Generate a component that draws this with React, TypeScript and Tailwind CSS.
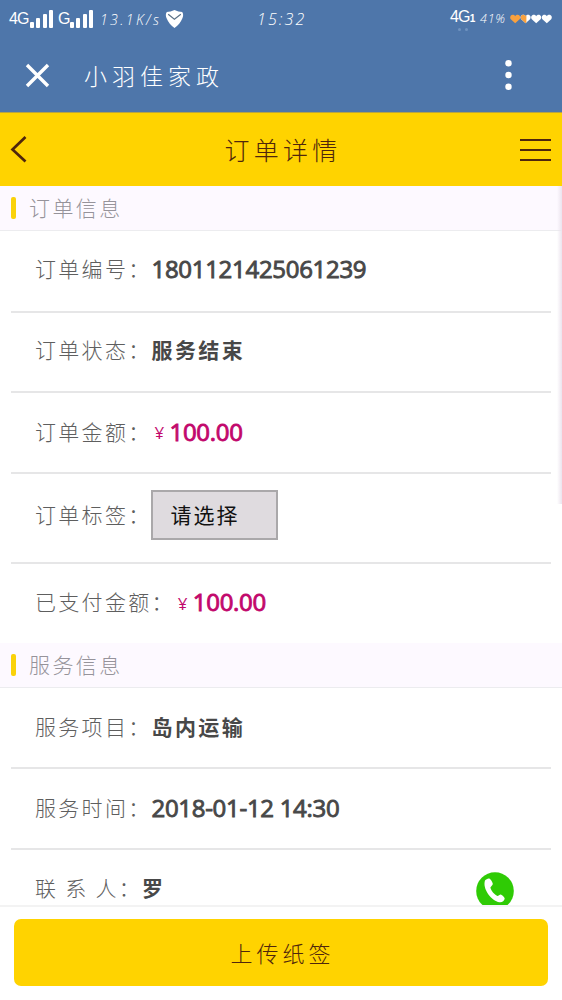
import type { ReactNode } from "react";

const CJK = "font-['Noto_Sans_CJK_SC',sans-serif]";
const LATIN = "font-['Open_Sans','Noto_Sans_CJK_SC',sans-serif]";

function Signal() {
  return (
    <div className="flex h-[18px] w-[23px] items-end justify-between">
      <i className="h-[6px] w-[4px] rounded-[1px] bg-white" />
      <i className="h-[10px] w-[4px] rounded-[1px] bg-white" />
      <i className="h-[14px] w-[4px] rounded-[1px] bg-white" />
      <i className="h-[18px] w-[4px] rounded-[1px] bg-white" />
    </div>
  );
}

const HEART =
  "M5.2 9.2 L0.8 5.2 C-0.6 3.4 0.5 0.8 2.8 0.8 C3.9 0.8 4.8 1.4 5.2 2.2 C5.6 1.4 6.5 0.8 7.6 0.8 C9.9 0.8 11 3.4 9.6 5.2 Z";

function Hearts() {
  return (
    <svg width="43" height="10" viewBox="0 0 43 10">
      <defs>
        <clipPath id="charged">
          <rect x="0" y="0" width="6" height="10" />
        </clipPath>
      </defs>
      <path d={HEART} fill="#f9a13e" />
      <path d={HEART} fill="#fff" transform="translate(10.4 0)" />
      <path d={HEART} fill="#f9a13e" transform="translate(10.4 0)" clipPath="url(#charged)" />
      <path d={HEART} fill="#fff" transform="translate(21 0)" />
      <path d={HEART} fill="#fff" transform="translate(31.6 0)" />
    </svg>
  );
}

function StatusBar() {
  return (
    <div className="flex h-[38px] items-center text-white">
      <div className="flex w-[257px] items-center pl-[9px]">
        <span className="w-[21px] font-['Liberation_Sans',sans-serif] text-[16px] tracking-[-0.8px]">4G</span>
        <Signal />
        <span className="ml-[5px] w-[12px] font-['Liberation_Sans',sans-serif] text-[16px]">G</span>
        <Signal />
        <span className="ml-[7px] w-[65px] whitespace-nowrap font-['Open_Sans',sans-serif] text-[14px] font-light italic tracking-[2.4px]">
          13.1K/s
        </span>
        <svg width="19" height="20" viewBox="0 0 19 20">
          <path
            d="M9.5 1 C12 2.2 15 3 17.2 3 C18.6 4.8 18.3 7.2 17.4 9.2 C15.9 13 13 16.5 9.5 19 C6 16.5 3.1 13 1.6 9.2 C0.7 7.2 0.4 4.8 1.8 3 C4 3 7 2.2 9.5 1Z"
            fill="#fff"
          />
          <path d="M3.2 5.3 L9.4 10.2 L15.8 5.3" fill="none" stroke="#5a7187" strokeWidth="1.2" />
        </svg>
      </div>
      <span className="w-[193px] font-['Open_Sans',sans-serif] text-[16px] font-light italic tracking-[2.1px]">15:32</span>
      <div className="flex w-[30px] flex-col">
        <div className="flex items-baseline font-['Liberation_Sans',sans-serif] leading-[18px]">
          <span className="text-[16px] tracking-[-0.8px]">4G</span>
          <span className="text-[10px] font-bold">1</span>
        </div>
        <div className="flex h-[3px] gap-[4px] pl-[8px]">
          <i className="size-[3px] rounded-full bg-[#6f93c0]" />
          <i className="size-[3px] rounded-full bg-[#6f93c0]" />
        </div>
      </div>
      <span className="w-[30px] font-['Open_Sans',sans-serif] text-[12.5px] font-light italic tracking-[0.8px]">41%</span>
      <Hearts />
    </div>
  );
}

function AppBar() {
  return (
    <div className="flex h-[74px] items-center pl-[25px] pr-[50px]">
      <svg width="25" height="25" viewBox="0 0 25 25" className="shrink-0">
        <path d="M2 2 L23 23 M23 2 L2 23" stroke="#fff" strokeWidth="3.4" fill="none" />
      </svg>
      <h1 className={`ml-[34px] flex-1 text-[23px] font-light tracking-[5px] text-white ${CJK}`}>小羽佳家政</h1>
      <svg width="7" height="32" viewBox="0 0 7 32">
        <circle cx="3.5" cy="4.3" r="3.2" fill="#fff" />
        <circle cx="3.5" cy="16" r="3.2" fill="#fff" />
        <circle cx="3.5" cy="27.7" r="3.2" fill="#fff" />
      </svg>
    </div>
  );
}

function TitleBar() {
  return (
    <div className="flex h-[74px] items-center justify-between border-t border-[#b8a441] bg-[#ffd300] pl-[10px] pr-[11px]">
      <svg width="31" height="28" viewBox="0 0 31 28" className="mb-[2px]">
        <path d="M15.5 2 L2.5 14.5 L15.5 26.5" fill="none" stroke="#4f260c" strokeWidth="2.7" />
      </svg>
      <h2 className={`pl-[5px] text-[25px] font-light tracking-[4.2px] text-[#4f260c] ${CJK}`}>订单详情</h2>
      <div className="flex w-[31px] flex-col gap-[8px] pt-[1px]">
        <i className="h-[2px] bg-[#4f260c]" />
        <i className="h-[2px] bg-[#4f260c]" />
        <i className="h-[2px] bg-[#4f260c]" />
      </div>
    </div>
  );
}

function SectionHeader({ title }: { title: string }) {
  return (
    <div className="flex h-[45px] shrink-0 items-center border-b border-[#ececef] bg-[#fdf9ff] pl-[11px]">
      <i className="h-[22px] w-[5px] rounded-[2px] bg-[#fad20a]" />
      <span className={`mb-[1px] ml-[13px] text-[21px] font-light tracking-[2.4px] text-[#96939a] ${CJK}`}>{title}</span>
    </div>
  );
}

function Row({
  label,
  size,
  last,
  children,
}: {
  label: string;
  size: string;
  last?: boolean;
  children: ReactNode;
}) {
  return (
    <div
      className={`mx-[11px] flex shrink-0 items-center border-[#e6e6e7] pl-[24px] text-[#484848] ${size} ${last ? "" : "border-b-2"}`}
    >
      <span className={`whitespace-pre text-[21px] font-light tracking-[2.3px] text-[#5e5e5e] ${CJK}`}>{label}</span>
      {children}
    </div>
  );
}

function NumberValue({ children }: { children: string }) {
  return (
    <span className={`text-[24px] font-normal tracking-[-0.3px] [-webkit-text-stroke:0.9px_currentColor] ${LATIN}`}>
      {children}
    </span>
  );
}

function TextValue({ children }: { children: string }) {
  return <span className={`text-[21px] font-bold tracking-[2.4px] ${CJK}`}>{children}</span>;
}

function Price({ children }: { children: string }) {
  return (
    <span className={`flex items-center pl-[3px] text-[#c2086c] ${LATIN}`}>
      <span className="w-[15px] pt-[3px] text-[17px] font-normal">¥</span>
      <span className="text-[24px] font-normal tracking-[-0.3px] [-webkit-text-stroke:0.9px_currentColor]">
        {children}
      </span>
    </span>
  );
}

export default function App() {
  return (
    <div className="relative flex h-[1000px] w-[562px] flex-col overflow-hidden bg-white">
      <header className="shrink-0 bg-[#4e76aa]">
        <StatusBar />
        <AppBar />
        <TitleBar />
      </header>

      <main className="flex min-h-0 flex-1 flex-col overflow-hidden">
        <SectionHeader title="订单信息" />
        <Row label="订单编号：" size="h-[82px] pb-[5px]">
          <NumberValue>1801121425061239</NumberValue>
        </Row>
        <Row label="订单状态：" size="h-[80px] pb-[4px]">
          <TextValue>服务结束</TextValue>
        </Row>
        <Row label="订单金额：" size="h-[81px] pb-[2px]">
          <Price>100.00</Price>
        </Row>
        <Row label="订单标签：" size="h-[90px] pb-[7px]">
          <button
            className={`-ml-[1px] h-[50px] w-[127px] border-2 border-[#aaa8aa] bg-[#dfdbdf] pl-[18px] text-left text-[21px] font-normal tracking-[2px] text-[#111] ${CJK}`}
          >
            请选择
          </button>
        </Row>
        <Row label="已支付金额：" size="h-[79px] pb-[3px]" last>
          <Price>100.00</Price>
        </Row>
        <SectionHeader title="服务信息" />
        <Row label="服务项目：" size="h-[81px] pb-[1px]">
          <TextValue>岛内运输</TextValue>
        </Row>
        <Row label="服务时间：" size="h-[81px] pb-[1px]">
          <NumberValue>2018-01-12 14:30</NumberValue>
        </Row>
        <Row label="联 系 人：" size="h-[80px] pb-[4px]" last>
          <TextValue>罗</TextValue>
          <svg className="ml-auto mr-[37px] mt-[6px]" width="38" height="38" viewBox="0 0 38 38">
            <circle cx="19" cy="19" r="18.8" fill="#2fcb05" />
            <path
              d="M9 8.5 C10 7.2 12 6 13.4 6.5 C15 7.4 16.3 9.7 16.8 11.8 C17 13.4 14.7 14.3 14.4 15.6 C15 18.8 18.5 22.8 21.3 24 C22.8 24 23.8 22.2 25.2 22.7 C26.9 23.5 28.4 25 28.7 26.6 C28.4 29.1 26 30.5 23.6 30.2 C15.2 29.2 6.2 16.5 9 8.5Z"
              fill="#fff"
            />
          </svg>
        </Row>
      </main>

      <footer className="h-[95px] shrink-0 border-t-2 border-[#f3f3f3] bg-white px-[14px] pt-[12px]">
        <button
          className={`h-[67px] w-full rounded-[7px] bg-[#ffd300] pl-[3px] text-[22px] font-light tracking-[4px] text-[#4f260c] ${CJK}`}
        >
          上传纸签
        </button>
      </footer>

      <div className="absolute right-0 top-[186px] h-[318px] w-[5px] bg-linear-to-r from-transparent to-[#ebe4ee]" />
    </div>
  );
}
